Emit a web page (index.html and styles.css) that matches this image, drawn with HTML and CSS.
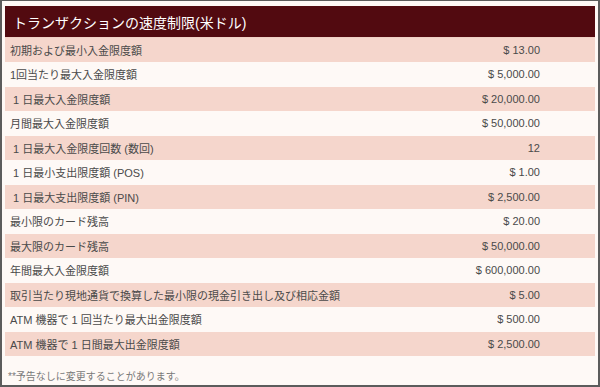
FILE: index.html
```html
<!DOCTYPE html>
<html lang="ja">
<head>
<meta charset="utf-8">
<title>トランザクションの速度制限</title>
<link rel="stylesheet" href="styles.css">
</head>
<body>
<div class="frame">
  <table class="limits">
    <thead>
      <tr><th colspan="2" class="title">トランザクションの速度制限(米ドル)</th></tr>
    </thead>
    <tbody>
      <tr class="odd"><td class="label">初期および最小入金限度額</td><td class="value">$ 13.00</td></tr>
      <tr><td class="label">1回当たり最大入金限度額</td><td class="value">$ 5,000.00</td></tr>
      <tr class="odd"><td class="label">&nbsp;1 日最大入金限度額</td><td class="value">$ 20,000.00</td></tr>
      <tr><td class="label">月間最大入金限度額</td><td class="value">$ 50,000.00</td></tr>
      <tr class="odd"><td class="label">&nbsp;1 日最大入金限度回数 (数回)</td><td class="value">12</td></tr>
      <tr><td class="label">&nbsp;1 日最小支出限度額 (POS)</td><td class="value">$ 1.00</td></tr>
      <tr class="odd"><td class="label">&nbsp;1 日最大支出限度額 (PIN)</td><td class="value">$ 2,500.00</td></tr>
      <tr><td class="label">最小限のカード残高</td><td class="value">$ 20.00</td></tr>
      <tr class="odd"><td class="label">最大限のカード残高</td><td class="value">$ 50,000.00</td></tr>
      <tr><td class="label">年間最大入金限度額</td><td class="value">$ 600,000.00</td></tr>
      <tr class="odd"><td class="label">取引当たり現地通貨で換算した最小限の現金引き出し及び相応金額</td><td class="value">$ 5.00</td></tr>
      <tr><td class="label">ATM 機器で 1 回当たり最大出金限度額</td><td class="value">$ 500.00</td></tr>
      <tr class="odd"><td class="label">ATM 機器で 1 日間最大出金限度額</td><td class="value">$ 2,500.00</td></tr>
    </tbody>
  </table>
  <p class="note">**予告なしに変更することがあります。</p>
</div>
</body>
</html>
```

FILE: styles.css
```css
html, body {
  margin: 0;
  padding: 0;
  background: #fef9f6;
}

.frame {
  box-sizing: border-box;
  width: 600px;
  height: 387px;
  border: 2px solid #5c5c5c;
  border-top-width: 1px;
  padding: 5px 3px 0 3px;
  background: #fef9f6;
  font-family: "Liberation Sans", "Noto Sans CJK JP", sans-serif;
  color: #4a4a4a;
}

.limits {
  width: 100%;
  border-collapse: separate;
  border-spacing: 0;
}

.title {
  background: #520a10;
  color: #ffffff;
  font-weight: normal;
  font-size: 14px;
  text-align: left;
  height: 32px;
  padding: 0 0 0 8px;
  box-sizing: border-box;
  border-bottom: 1px solid #f0d0c6;
}

.limits td {
  font-size: 11px;
  height: 24.5px;
  padding: 0;
  box-sizing: border-box;
  border-top: 1px solid #fef9f6;
}

.limits tbody tr:first-child td {
  border-top: none;
  height: 23.5px;
}

.limits tr.odd td {
  background: #f5d6cc;
}

.label {
  padding-left: 5px !important;
  text-align: left;
}

.value {
  text-align: right;
  padding-right: 55px !important;
}

.note {
  margin: 12px 0 0 3px;
  font-size: 10px;
  color: #7a7a7a;
}
```
